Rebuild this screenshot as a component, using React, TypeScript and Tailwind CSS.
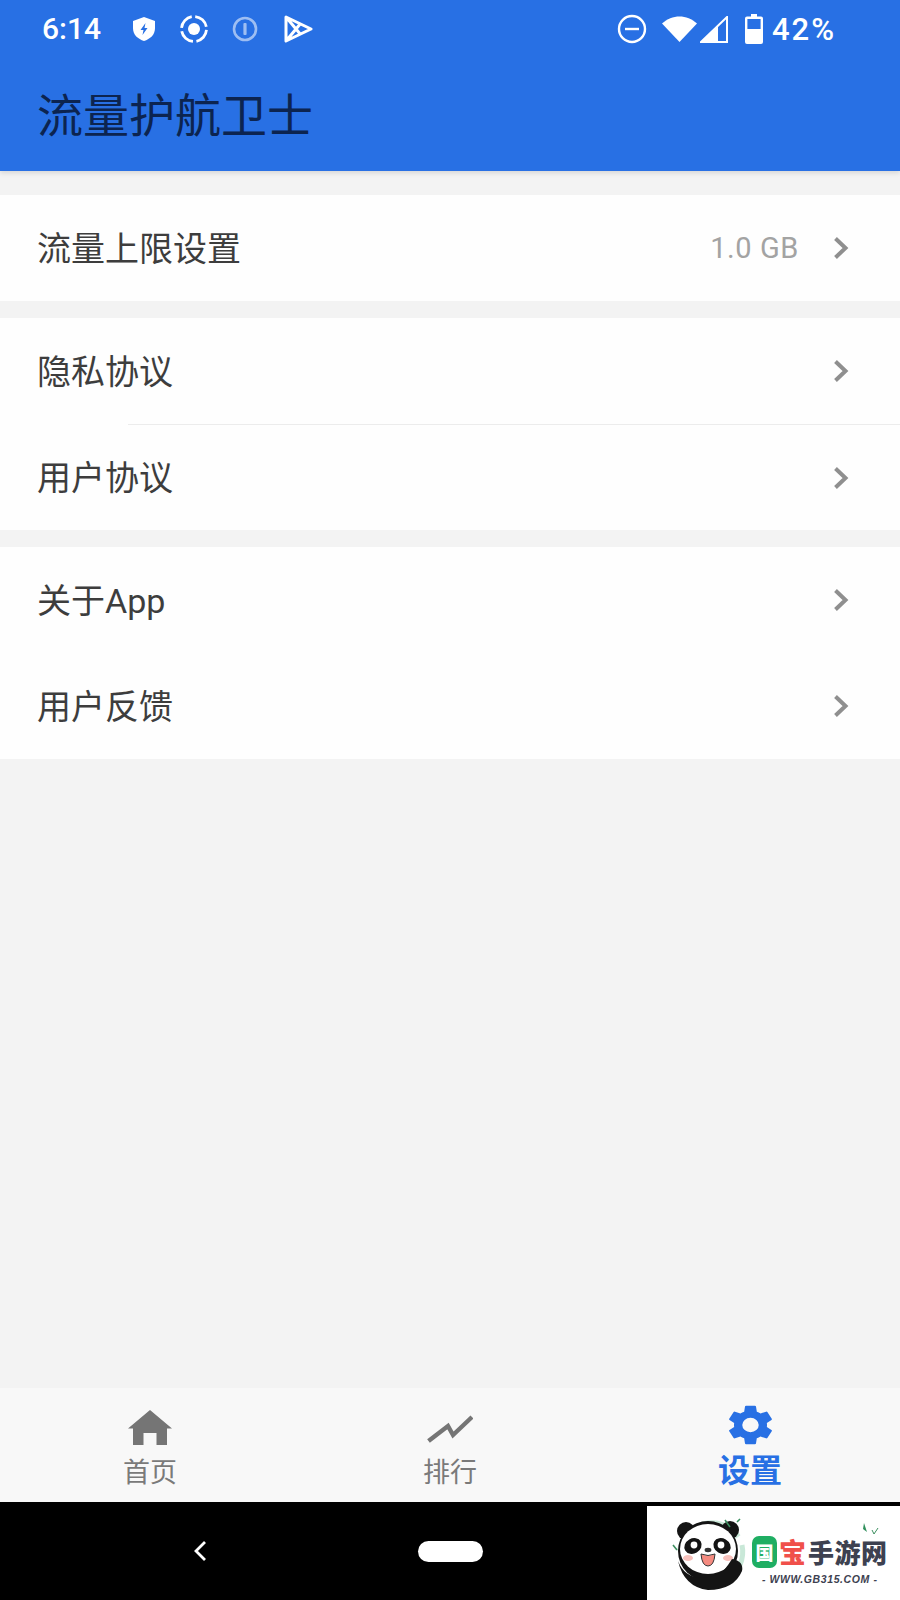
import React from 'react';

const CJK = "font-['Roboto','Noto_Sans_CJK_SC',sans-serif]";

const Chevron = () => (
  <svg width="18" height="24" viewBox="0 0 18 24" className="shrink-0">
    <path d="M3.5 2.5 L13.5 12 L3.5 21.5" fill="none" stroke="#8f8f8f" strokeWidth="4" />
  </svg>
);

const Row = ({ label, value, h = 'h-[106px]' }: { label: string; value?: string; h?: string }) => (
  <div className={`${h} flex items-center bg-[#fefefe] pl-[37px] pr-[50px]`}>
    <span className="flex-1 pt-[1px] text-[34px] leading-none text-[#3d3d3d]">{label}</span>
    {value && <span className="mr-[33px] pt-[2px] text-[29px] tracking-[0.6px] text-[#a3a3a3]">{value}</span>}
    <Chevron />
  </div>
);

const StatusBar = () => (
  <div className="flex h-[58px] items-center pl-[42px] pr-[64px] text-white">
    <span className="w-[59px] text-[30px] font-medium leading-none">6:14</span>
    <div className="ml-[31px] flex items-center">
      <svg width="24" height="26" viewBox="0 0 24 26">
        <path d="M12 1 L23 5 V12 C23 19 18 23 12 25 C6 23 1 19 1 12 V5 Z" fill="#fff" />
        <path d="M13.5 7 L8.5 14 H11.5 L10.5 19 L15.5 12 H12.5 Z" fill="#2870e4" />
      </svg>
      <svg width="30" height="28" viewBox="0 0 30 28" className="ml-[23px]">
        <circle cx="15" cy="14" r="6" fill="#fff" />
        <circle cx="15" cy="14" r="12.5" fill="none" stroke="#fff" strokeWidth="2.8" strokeDasharray="16 3.6" strokeDashoffset="-1" />
      </svg>
      <svg width="26" height="26" viewBox="0 0 26 26" className="ml-[23px]" opacity="0.55">
        <circle cx="13" cy="13" r="11" fill="none" stroke="#fff" strokeWidth="2.6" />
        <rect x="11.4" y="7" width="3.2" height="12" rx="1" fill="#fff" />
      </svg>
      <svg width="30" height="30" viewBox="0 0 30 30" className="ml-[25px]">
        <path d="M3 3 L28 15 L3 27 Z M3 3 L18 21 M3 27 L18 9" fill="none" stroke="#fff" strokeWidth="3" strokeLinejoin="round" />
      </svg>
    </div>
    <div className="ml-auto flex items-center">
      <svg width="30" height="30" viewBox="0 0 30 30">
        <circle cx="15" cy="15" r="13" fill="none" stroke="#fff" strokeWidth="2.4" />
        <rect x="8" y="13.8" width="14" height="2.4" fill="#fff" />
      </svg>
      <svg width="35" height="26" viewBox="0 0 35 26" className="ml-[15px]">
        <path d="M0 7.5 C10 -2 25 -2 35 7.5 L17.5 26 Z" fill="#fff" />
      </svg>
      <svg width="28" height="27" viewBox="0 0 28 27" className="ml-[3px]">
        <path d="M1 26 L27 1 V26 Z" fill="none" stroke="#fff" strokeWidth="2" />
        <path d="M1 26 L18 9.6 V26 Z" fill="#fff" />
      </svg>
      <svg width="18" height="30" viewBox="0 0 18 30" className="ml-[17px]">
        <path d="M6 0 H12 V2.5 H16 Q18 2.5 18 4.5 V28 Q18 30 16 30 H2 Q0 30 0 28 V4.5 Q0 2.5 2 2.5 H6 Z" fill="#fff" />
        <rect x="2.4" y="5" width="13.2" height="10" fill="#2870e4" />
      </svg>
      <span className="ml-[9px] text-[31px] font-medium leading-none tracking-[2px]">42%</span>
    </div>
  </div>
);

const Panda = () => (
  <svg width="78" height="76" viewBox="0 0 78 76" className="shrink-0">
    <path d="M10 36 A32 32 0 0 1 68 22" fill="none" stroke="#c9e8d8" strokeWidth="6" />
    <path d="M72 30 A33 33 0 0 1 70 50" fill="none" stroke="#c9e8d8" strokeWidth="5" />
    <circle cx="16" cy="16" r="9" fill="#141414" />
    <circle cx="60" cy="15" r="9" fill="#141414" />
    <circle cx="38" cy="36" r="30" fill="#141414" />
    <ellipse cx="38" cy="34" rx="28" ry="25" fill="#fff" />
    <ellipse cx="23" cy="31" rx="9" ry="7.5" fill="#141414" transform="rotate(-30 23 31)" />
    <ellipse cx="52" cy="31" rx="9" ry="7.5" fill="#141414" transform="rotate(30 52 31)" />
    <circle cx="24" cy="30" r="3.4" fill="#fff" />
    <circle cx="51" cy="30" r="3.4" fill="#fff" />
    <ellipse cx="38" cy="35" rx="3.4" ry="2.2" fill="#333" />
    <path d="M31 39 Q38 42 45 39 Q44 51 38 51 Q32 51 31 39 Z" fill="#f58b80" stroke="#333" strokeWidth="1" />
    <ellipse cx="18" cy="43" rx="5" ry="3" fill="#f7c0bb" />
    <ellipse cx="58" cy="43" rx="5" ry="3" fill="#f7c0bb" />
    <path d="M8 46 Q16 66 38 62 Q52 60 58 50 L62 44 Q74 46 72 56 Q64 75 38 75 Q14 72 8 46 Z" fill="#141414" />
    <path d="M55 5 L60 12 M67 7 L70 4 M3 30 L7 35" stroke="#3c8f5f" strokeWidth="1.6" fill="none" />
  </svg>
);

const Watermark = () => (
  <div className="absolute bottom-0 right-0 flex h-[94px] w-[253px] items-center bg-white pl-[23px]">
    <Panda />
    <div className="relative ml-[4px] flex flex-col items-center pt-[14px]">
      <div className="flex items-center font-['Noto_Sans_CJK_SC',sans-serif] font-black leading-none">
        <span className="flex h-[32px] w-[25px] items-center justify-center rounded-[7px] bg-[#1fae63] text-[18px] text-white">国</span>
        <span className="ml-[2px] text-[27px] text-[#f0504a]">宝</span>
        <span className="ml-[2px] text-[26px] tracking-[0.5px] text-[#3d4150]">手游网</span>
      </div>
      <span className="mt-[6px] font-['Liberation_Sans',sans-serif] text-[10.5px] font-bold italic leading-none tracking-[0.6px] text-[#3d4150]">- WWW.GB315.COM -</span>
      <svg width="18" height="12" viewBox="0 0 18 12" className="absolute right-[8px] top-[1px]">
        <path d="M2 0 L5 9 L1 6 Z" fill="#2f8f5b" />
        <path d="M10 7 L12 11 L16 5" fill="none" stroke="#3c8f5f" strokeWidth="1" />
      </svg>
    </div>
  </div>
);

export default function App() {
  return (
    <div className={`${CJK} flex h-[1600px] w-[900px] flex-col overflow-hidden bg-[#f3f3f3]`}>
      <div className="h-[171px] shrink-0 bg-[#2870e4] shadow-[0_2px_5px_rgba(0,0,0,0.12)]">
        <StatusBar />
        <div className="pl-[37px] pt-[35px] text-[46px] leading-none text-[#0c2450]">流量护航卫士</div>
      </div>

      <div className="mt-[24px]">
        <Row label="流量上限设置" value="1.0 GB" />
      </div>
      <div className="mt-[17px]">
        <Row label="隐私协议" />
        <div className="flex h-px bg-[#fefefe]">
          <div className="ml-[128px] flex-1 bg-[#ececec]" />
        </div>
        <Row label="用户协议" h="h-[105px]" />
      </div>
      <div className="mt-[17px]">
        <Row label="关于App" />
        <Row label="用户反馈" />
      </div>

      <div className="flex-1" />

      <div className="flex h-[114px] shrink-0 bg-[#f8f8f8]">
        <div className="flex w-[300px] flex-col items-center pt-[22px]">
          <svg width="46" height="36" viewBox="0 0 46 36">
            <path d="M23 0 L45 18.5 H40 V35 H29.5 V23 H16.5 V35 H6 V18.5 H1 Z" fill="#757575" />
          </svg>
          <span className="mt-[14px] text-[27px] leading-none text-[#7a7a7a]">首页</span>
        </div>
        <div className="flex w-[300px] flex-col items-center pt-[27px]">
          <svg width="46" height="28" viewBox="0 0 46 28">
            <path d="M1.5 26 L21 11 L26 20 L45 2" fill="none" stroke="#757575" strokeWidth="4.4" />
          </svg>
          <span className="mt-[17px] text-[27px] leading-none text-[#7a7a7a]">排行</span>
        </div>
        <div className="flex w-[300px] flex-col items-center pt-[13px]">
          <svg width="55" height="48" viewBox="0 0 24 24" preserveAspectRatio="none">
            <path
              fill="#2870e4"
              d="M19.14 12.94c.04-.3.06-.61.06-.94s-.02-.64-.07-.94l2.03-1.58a.49.49 0 0 0 .12-.61l-1.92-3.32a.49.49 0 0 0-.59-.22l-2.39.96a7.03 7.03 0 0 0-1.62-.94l-.36-2.54a.48.48 0 0 0-.48-.41h-3.84a.48.48 0 0 0-.48.41l-.36 2.54c-.59.24-1.13.57-1.62.94l-2.39-.96a.49.49 0 0 0-.59.22L2.72 8.87a.48.48 0 0 0 .12.61l2.03 1.58c-.05.3-.07.62-.07.94s.02.64.07.94l-2.03 1.58a.49.49 0 0 0-.12.61l1.92 3.32c.12.22.37.29.59.22l2.39-.96c.5.38 1.03.7 1.62.94l.36 2.54c.05.24.24.41.48.41h3.84c.24 0 .44-.17.47-.41l.36-2.54c.59-.24 1.13-.56 1.62-.94l2.39.96c.22.08.47 0 .59-.22l1.92-3.32a.48.48 0 0 0-.12-.61l-2.01-1.58zM12 15.6A3.6 3.6 0 1 1 12 8.4a3.6 3.6 0 0 1 0 7.2z"
            />
          </svg>
          <span className="mt-[6px] text-[32px] font-bold leading-none text-[#2870e4]">设置</span>
        </div>
      </div>

      <div className="relative flex h-[98px] shrink-0 items-center bg-black">
        <svg width="16" height="22" viewBox="0 0 16 22" className="ml-[192px]">
          <path d="M13 2 L4 11 L13 20" fill="none" stroke="#fff" strokeWidth="2.8" />
        </svg>
        <div className="ml-[210px] h-[21px] w-[65px] rounded-full bg-white" />
        <Watermark />
      </div>
    </div>
  );
}
